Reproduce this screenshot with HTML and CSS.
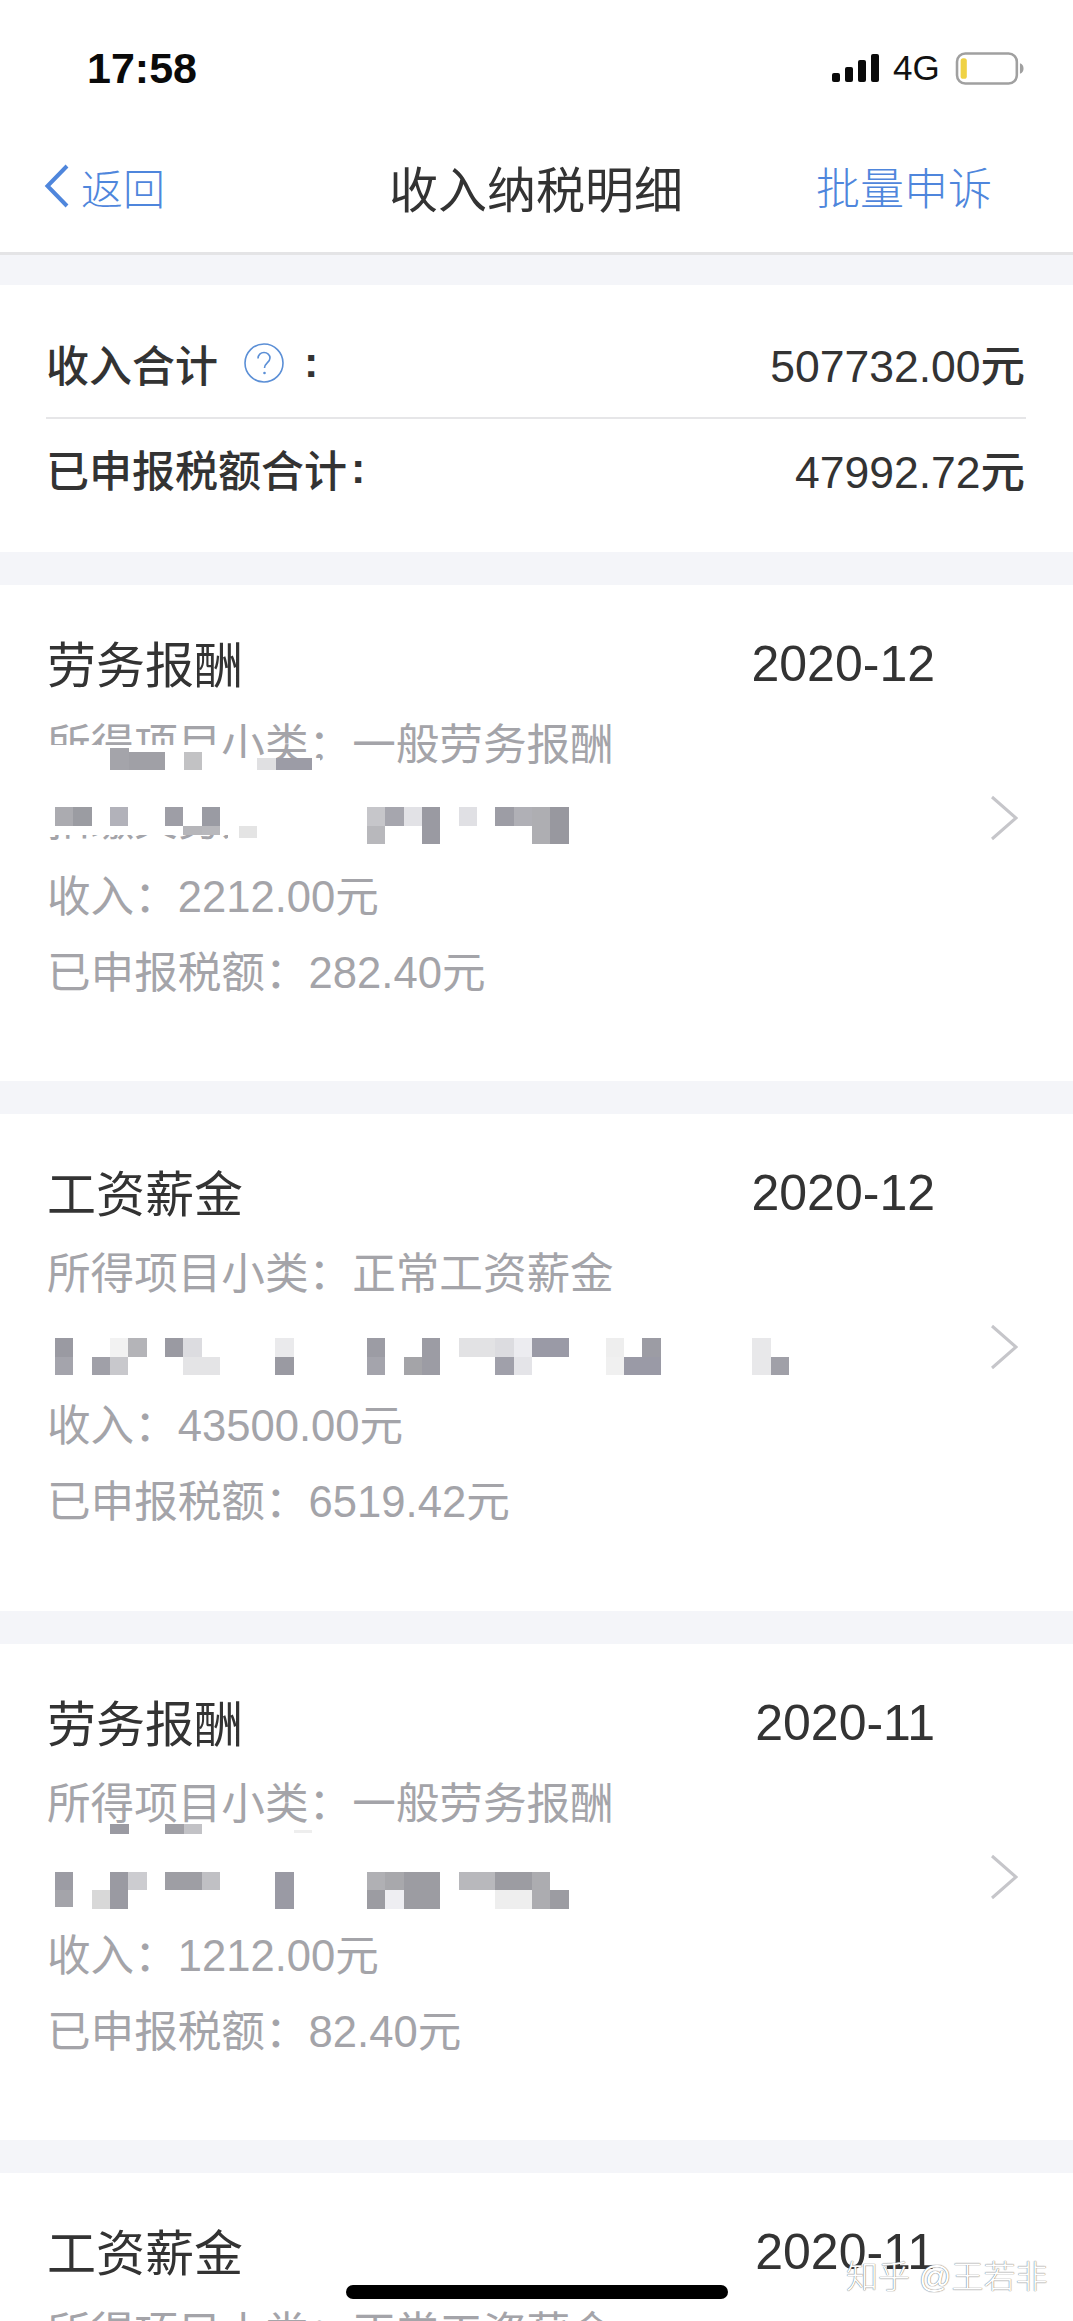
FILE: index.html
```html
<!DOCTYPE html>
<html lang="zh-CN">
<head>
<meta charset="utf-8">
<title>收入纳税明细</title>
<link rel="stylesheet" href="styles.css">
</head>
<body>
<div class="page">
  <header class="top">
    <div class="status">
      <span class="time">17:58</span>
      <div class="status-right">
        <svg class="signal" viewBox="0 0 47 28"><rect x="0" y="19" width="8" height="9" rx="2"/><rect x="13" y="13" width="8" height="15" rx="2"/><rect x="26" y="6" width="8" height="22" rx="2"/><rect x="39" y="0" width="8" height="28" rx="2"/></svg>
        <span class="net">4G</span>
        <svg class="battery" viewBox="0 0 66 32"><rect x="1.5" y="1.5" width="58" height="29" rx="8" fill="#fff" stroke="#a0a0a0" stroke-width="2.5"/><rect x="5" y="6" width="6" height="20" rx="2.5" fill="#efd244"/><path d="M62.5 11c2.5.6 3.5 2.6 3.5 5s-1 4.400-3.500 5z" fill="#a0a0a0"/></svg>
      </div>
    </div>
    <nav class="nav">
      <a class="back"><svg class="back-icon" viewBox="0 0 26 44"><path d="M23 2 3.500 22 23 42" fill="none" stroke="#4f86dc" stroke-width="4"/></svg>返回</a>
      <h1 class="nav-title">收入纳税明细</h1>
      <a class="nav-action">批量申诉</a>
    </nav>
  </header>

  <div class="gap"></div>

  <section class="summary">
    <div class="sum-row sum-row-line">
      <div class="sum-label">收入合计
        <svg class="help" viewBox="0 0 40 40"><circle cx="20" cy="20" r="19" fill="none" stroke="#5b8fd6" stroke-width="1.600"/><path d="M14 15.500c0-3.500 2.700-6 6-6s6 2.300 6 5.500c0 4.500-5.500 4.700-5.500 10" fill="none" stroke="#5b8fd6" stroke-width="1.600"/><circle cx="20.500" cy="30" r="1.300" fill="#5b8fd6"/></svg>
        <span class="colon">:</span></div>
      <div class="sum-value">507732.00元</div>
    </div>
    <div class="sum-row">
      <div class="sum-label">已申报税额合计<span class="colon-tight">:</span></div>
      <div class="sum-value">47992.72元</div>
    </div>
  </section>

  <div class="gap"></div>

  <section class="card">
    <div class="card-body">
      <div class="card-head"><span class="card-title">劳务报酬</span><span class="card-date">2020-12</span></div>
      <p class="line">所得项目小类&#xFF1A;一般劳务报酬</p>
      <p class="line">扣缴义务人&#xFF1A;</p>
      <p class="line">收入&#xFF1A;2212.00元</p>
      <p class="line">已申报税额&#xFF1A;282.40元</p>
    </div>
    <svg class="chev" viewBox="0 0 28 46"><path d="M2 2 26 23 2 44" fill="none" stroke="#c6c6ca" stroke-width="3"/></svg>
    <svg class="mosaic" viewBox="0 0 1073 496" shape-rendering="crispEdges">
      <g fill="#fff"><rect x="46" y="160" width="174" height="40"/><rect x="220" y="173" width="100" height="27"/><rect x="46" y="200" width="800" height="50"/><rect x="228" y="250" width="600" height="30"/></g>
      <rect x="110" y="163" width="18.500" height="22" fill="#a4a4aa"/><rect x="128.500" y="167" width="36.500" height="18" fill="#a0a0a6"/><rect x="183.500" y="167" width="18.500" height="18" fill="#c2c2c4"/><rect x="257" y="173" width="18.500" height="12" fill="#e0e0e2"/><rect x="275.500" y="173" width="36.500" height="12" fill="#9c9ca6"/>
      <g transform="translate(55 222) scale(18.350 18.500)">
        <rect x="0" y="0" width="1" height="1" fill="#ababb0"/><rect x="1" y="0" width="1" height="1" fill="#9b9ca2"/><rect x="3" y="0" width="1" height="1" fill="#b2b2ba"/><rect x="6" y="0" width="1" height="1" fill="#9e9ea6"/><rect x="8" y="0" width="1" height="1" fill="#9a9ba3"/><rect x="17" y="0" width="1" height="1" fill="#c6c6ca"/><rect x="18" y="0" width="1" height="1" fill="#a6a6ae"/><rect x="19" y="0" width="1" height="1" fill="#e2e2e6"/><rect x="20" y="0" width="1" height="1" fill="#9a9aa2"/><rect x="22" y="0" width="1" height="1" fill="#e0e0e4"/><rect x="24" y="0" width="1" height="1" fill="#9d9da5"/><rect x="25" y="0" width="1" height="1" fill="#b0b0b6"/><rect x="26" y="0" width="1" height="1" fill="#aeaeb2"/><rect x="27" y="0" width="1" height="1" fill="#98989f"/>
        <rect x="7" y="1" width="1" height=".5" fill="#b6b6ba"/><rect x="8" y="1" width="1" height=".5" fill="#b8b8bc"/><rect x="10" y="1" width="1" height=".7" fill="#e4e4e4"/><rect x="17" y="1" width="1" height="1" fill="#b8b8bc"/><rect x="20" y="1" width="1" height="1" fill="#9a9aa2"/><rect x="26" y="1" width="1" height="1" fill="#aeaeb2"/><rect x="27" y="1" width="1" height="1" fill="#98989f"/>
      </g>
    </svg>
  </section>

  <div class="gap"></div>

  <section class="card">
    <div class="card-body">
      <div class="card-head"><span class="card-title">工资薪金</span><span class="card-date">2020-12</span></div>
      <p class="line">所得项目小类&#xFF1A;正常工资薪金</p>
      <p class="line">扣缴义务人&#xFF1A;</p>
      <p class="line">收入&#xFF1A;43500.00元</p>
      <p class="line">已申报税额&#xFF1A;6519.42元</p>
    </div>
    <svg class="chev" viewBox="0 0 28 46"><path d="M2 2 26 23 2 44" fill="none" stroke="#c6c6ca" stroke-width="3"/></svg>
    <svg class="mosaic" viewBox="0 0 1073 496" shape-rendering="crispEdges">
      <rect x="46" y="200" width="800" height="78" fill="#fff"/>
      <g transform="translate(55 224) scale(18.350 18.700)">
        <rect x="0" y="0" width="1" height="1" fill="#9a9aa2"/><rect x="3" y="0" width="1" height="1" fill="#f2f2f2"/><rect x="4" y="0" width="1" height="1" fill="#b4b4b8"/><rect x="6" y="0" width="1" height="1" fill="#9a9aa2"/><rect x="7" y="0" width="1" height="1" fill="#dcdce0"/><rect x="12" y="0" width="1" height="1" fill="#eaeaec"/><rect x="17" y="0" width="1" height="1" fill="#9c9ca4"/><rect x="20" y="0" width="1" height="1" fill="#9c9ca4"/><rect x="22" y="0" width="2" height="1" fill="#e2e2e4"/><rect x="24" y="0" width="1" height="1" fill="#dcdce0"/><rect x="25" y="0" width="1" height="1" fill="#ececf0"/><rect x="26" y="0" width="2" height="1" fill="#9a9aa6"/><rect x="30" y="0" width="1" height="1" fill="#eeeeee"/><rect x="32" y="0" width="1" height="1" fill="#9c9ca4"/><rect x="38" y="0" width="1" height="1" fill="#e8e8ea"/>
        <rect x="0" y="1" width="1" height="1" fill="#a4a4ac"/><rect x="2" y="1" width="1" height="1" fill="#a0a0a8"/><rect x="3" y="1" width="1" height="1" fill="#c8c8cc"/><rect x="7" y="1" width="2" height="1" fill="#e4e4e6"/><rect x="12" y="1" width="1" height="1" fill="#9a9aa2"/><rect x="17" y="1" width="1" height="1" fill="#a4a4ac"/><rect x="19" y="1" width="1" height="1" fill="#a4a4a8"/><rect x="20" y="1" width="1" height="1" fill="#9c9ca4"/><rect x="24" y="1" width="1" height="1" fill="#a0a0aa"/><rect x="25" y="1" width="1" height="1" fill="#e4e4e8"/><rect x="30" y="1" width="1" height="1" fill="#f0f0f0"/><rect x="31" y="1" width="2" height="1" fill="#9a9aa6"/><rect x="38" y="1" width="1" height="1" fill="#e8e8ea"/><rect x="39" y="1" width="1" height="1" fill="#a0a0a8"/>
      </g>
    </svg>
  </section>

  <div class="gap"></div>

  <section class="card">
    <div class="card-body">
      <div class="card-head"><span class="card-title">劳务报酬</span><span class="card-date">2020-11</span></div>
      <p class="line">所得项目小类&#xFF1A;一般劳务报酬</p>
      <p class="line">扣缴义务人&#xFF1A;</p>
      <p class="line">收入&#xFF1A;1212.00元</p>
      <p class="line">已申报税额&#xFF1A;82.40元</p>
    </div>
    <svg class="chev" viewBox="0 0 28 46"><path d="M2 2 26 23 2 44" fill="none" stroke="#c6c6ca" stroke-width="3"/></svg>
    <svg class="mosaic" viewBox="0 0 1073 496" shape-rendering="crispEdges">
      <rect x="46" y="200" width="800" height="80" fill="#fff"/>
      <rect x="110" y="180" width="18.500" height="10" fill="#9a9aa2"/><rect x="165" y="180" width="18.500" height="10" fill="#a0a0a6"/><rect x="183.500" y="180" width="18.500" height="10" fill="#c2c2c6"/><rect x="293.500" y="186" width="18.500" height="3" fill="#eeeeee"/>
      <g transform="translate(55 228) scale(18.350 18.300)">
        <rect x="0" y="0" width="1" height="1" fill="#9c9ca4"/><rect x="3" y="0" width="1" height="1" fill="#9a9aa2"/><rect x="4" y="0" width="1" height="1" fill="#ccccd0"/><rect x="6" y="0" width="2" height="1" fill="#9e9ea4"/><rect x="8" y="0" width="1" height="1" fill="#c0c0c4"/><rect x="12" y="0" width="1" height="1" fill="#9a9aa4"/><rect x="17" y="0" width="1" height="1" fill="#b0b0b4"/><rect x="18" y="0" width="1" height="1" fill="#a8a8ac"/><rect x="19" y="0" width="2" height="1" fill="#9c9ca2"/><rect x="22" y="0" width="2" height="1" fill="#b8b8bc"/><rect x="24" y="0" width="2" height="1" fill="#9c9ca2"/><rect x="26" y="0" width="1" height="1" fill="#acacb0"/>
        <rect x="0" y="1" width="1" height=".9" fill="#a4a4aa"/><rect x="2" y="1" width="1" height="1" fill="#d8d8d8"/><rect x="3" y="1" width="1" height="1" fill="#9a9aa2"/><rect x="12" y="1" width="1" height="1" fill="#9a9aa4"/><rect x="17" y="1" width="1" height="1" fill="#9c9ca2"/><rect x="18" y="1" width="1" height="1" fill="#eeeef2"/><rect x="19" y="1" width="2" height="1" fill="#9c9ca2"/><rect x="24" y="1" width="2" height="1" fill="#eeeeee"/><rect x="26" y="1" width="1" height="1" fill="#acacb0"/><rect x="27" y="1" width="1" height="1" fill="#9c9ca2"/>
      </g>
    </svg>
  </section>

  <div class="gap"></div>

  <section class="card">
    <div class="card-body">
      <div class="card-head"><span class="card-title">工资薪金</span><span class="card-date">2020-11</span></div>
      <p class="line">所得项目小类&#xFF1A;正常工资薪金</p>
    </div>
  </section>

  <div class="home-bar"></div>
  <div class="watermark">知乎 @王若非</div>
</div>
</body>
</html>
```

FILE: styles.css
```css
* { box-sizing: border-box; }
html, body { margin: 0; padding: 0; background: #fff; }
body { font-family: "Liberation Sans", "Noto Sans CJK SC", sans-serif; }
.page { position: relative; width: 1073px; height: 2321px; overflow: hidden; background: #fff; }

.top { height: 252px; background: #fff; }
.status { height: 136px; display: flex; justify-content: space-between; align-items: center; padding: 0 49px 0 87px; }
.time { font-size: 43px; font-weight: 700; color: #0a0a0a; }
.status-right { display: flex; align-items: center; }
.signal { width: 47px; height: 28px; fill: #0a0a0a; }
.net { font-size: 35px; color: #111; margin-left: 14px; width: 62px; }
.battery { width: 69px; height: 33px; }

.nav { position: relative; display: flex; justify-content: space-between; align-items: center; height: 100px; padding: 0 81px 0 44px; }
.back, .nav-action { font-size: 42px; color: #4f86dc; font-weight: 300; }
.nav-action { font-size: 44px; }
.back { display: flex; align-items: center; gap: 11px; }
.back-icon { width: 26px; height: 44px; }
.nav-title { position: absolute; left: 0; right: 0; margin: 0; text-align: center; font-size: 49px; font-weight: 400; color: #333; padding-right: 1px; }

.gap { height: 33px; background: #f4f5f9; }
.top + .gap { border-top: 3px solid #e4e4e6; }

.summary { height: 267px; padding: 0 47px 0 46px; background: #fff; }
.sum-row { display: flex; justify-content: space-between; align-items: center; height: 98px; color: #333; }
.sum-row-line { height: 134px; padding-top: 23px; border-bottom: 2px solid #e6e6e8; }
.sum-label { display: flex; align-items: center; font-size: 43px; font-weight: 500; }
.sum-value { font-size: 44.500px; font-weight: 500; margin-right: 1px; }
.help { width: 40px; height: 40px; margin-left: 26px; }
.colon { margin-left: 20px; font-weight: 700; }
.colon-tight { margin-left: 4px; font-weight: 700; }

.card { position: relative; display: flex; height: 496.400px; background: #fff; padding: 41px 55px 0 47px; }
.card-body { width: 888px; }
.card-head { display: flex; justify-content: space-between; align-items: center; height: 76px; margin-bottom: 5px; }
.card-title { font-size: 49px; color: #333; font-weight: 400; padding-bottom: 5px; }
.card-date { font-size: 50px; color: #333; }
.line { margin: 0; height: 76px; line-height: 76px; font-size: 43.600px; color: #a4a4a9; font-weight: 400; white-space: nowrap; }
.chev { width: 28px; height: 46px; margin: 169px 0 0 55px; flex: none; }
.mosaic { position: absolute; left: 0; top: 0; width: 1073px; height: 496px; }

.home-bar { position: absolute; left: 346px; top: 2285px; width: 382px; height: 14px; border-radius: 7px; background: #000; }
.watermark { position: absolute; left: 846px; top: 2258px; font-size: 32px; line-height: 38px; color: #fff; font-weight: 300; text-shadow: 0 0 1px #777, 0 0 1px #777; white-space: nowrap; }
```
